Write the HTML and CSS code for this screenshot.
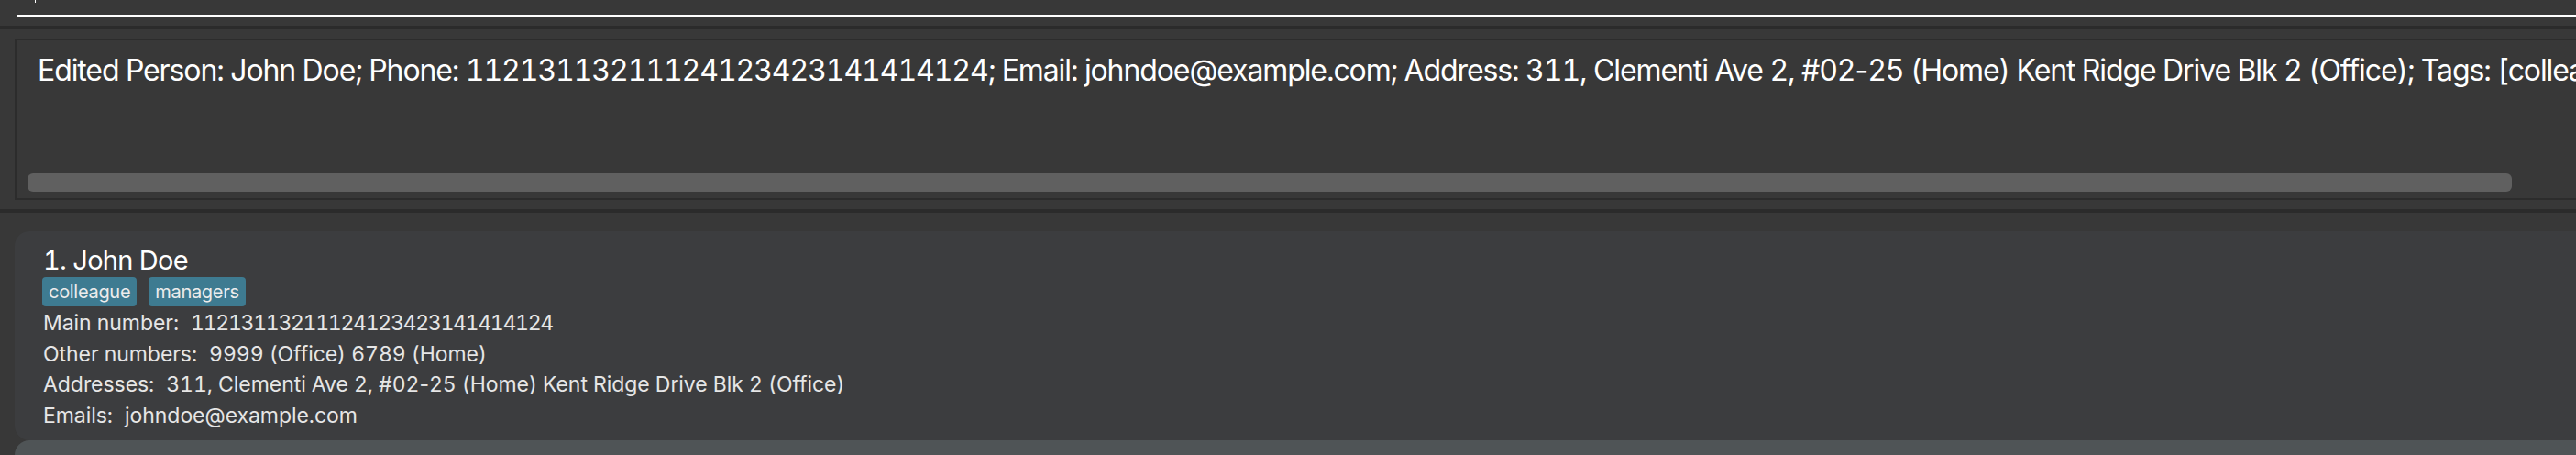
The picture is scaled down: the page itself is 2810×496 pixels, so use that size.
FILE: index.html
```html
<!DOCTYPE html>
<html>
<head>
<meta charset="utf-8">
<link rel="stylesheet" href="styles.css">
</head>
<body>
<div class="app">
  <div class="command-box">
    <div class="command-field"><div class="caret"></div></div>
  </div>
  <div class="divider"></div>
  <div class="result-pane">
    <div class="result-box">
      <div class="result-text">Edited Person: John Doe; Phone: 11213113211124123423141414124; Email: johndoe@example.com; Address: 311, Clementi Ave 2, #02<span class="plain">-</span>25 (Home) Kent Ridge Drive Blk 2 (Office); Tags: [colleague][managers]</div>
      <div class="hscroll"><div class="thumb"></div></div>
    </div>
  </div>
  <div class="divider"></div>
  <div class="list-pane">
    <div class="card">
      <div class="card-title">1. John Doe</div>
      <div class="tags"><span class="tag">colleague</span><span class="tag">managers</span></div>
      <div class="fields">
        <div class="field"><span class="label">Main number:</span><span class="value number">11213113211124123423141414124</span></div>
        <div class="field"><span class="label">Other numbers:</span><span class="value">9999 (Office) 6789 (Home)</span></div>
        <div class="field"><span class="label">Addresses:</span><span class="value">311, Clementi Ave 2, #02<span class="plain">-</span>25 (Home) Kent Ridge Drive Blk 2 (Office)</span></div>
        <div class="field"><span class="label">Emails:</span><span class="value">johndoe@example.com</span></div>
      </div>
    </div>
    <div class="card card-next"></div>
  </div>
</div>
</body>
</html>
```

FILE: styles.css
```css
html, body {
  margin: 0;
  padding: 0;
}
body {
  background: #383838;
  width: 2810px;
  height: 496px;
  overflow: hidden;
  font-family: Inter, "Liberation Sans", sans-serif;
  font-feature-settings: "tnum" 1;
  color: #ffffff;
}
.app {
  display: flex;
  flex-direction: column;
}
.command-box {
  height: 28px;
  padding-left: 18px;
  box-sizing: border-box;
}
.command-field {
  height: 18px;
  border-bottom: 2px solid #ffffff;
  box-sizing: border-box;
}
.caret {
  width: 1px;
  height: 3px;
  background: #ffffff;
  margin-left: 20px;
}
.divider {
  height: 4px;
  background: #2b2b2b;
}
.result-pane {
  padding: 10px 0 10px 16px;
}
.result-box {
  height: 176px;
  box-sizing: border-box;
  border: 2px solid #2c2c2c;
  border-right: none;
  padding: 13px 0 7px 23px;
  display: flex;
  flex-direction: column;
  overflow: hidden;
}
.result-text {
  font-size: 32px;
  line-height: 39px;
  white-space: nowrap;
  letter-spacing: -1.1px;
}
.plain {
  font-feature-settings: normal;
}
.hscroll {
  margin-top: auto;
  margin-left: -11px;
}
.thumb {
  width: 2710px;
  height: 20px;
  border-radius: 6px;
  background: #606060;
}
.list-pane {
  padding: 20px 0 0 16px;
  display: flex;
  flex-direction: column;
}
.card {
  height: 228px;
  box-sizing: border-box;
  background: #3c3d3f;
  border-radius: 16px 0 0 16px;
  padding: 15px 0 0 31px;
}
.card-next {
  background: #4f5456;
  height: 40px;
}
.card-title {
  font-size: 29px;
  line-height: 34px;
  letter-spacing: -0.7px;
}
.tags {
  display: flex;
  gap: 13px;
  margin-top: 1px;
  margin-left: -1px;
}
.tag {
  height: 32px;
  box-sizing: border-box;
  padding: 0 7px;
  background: #3e7b91;
  border-radius: 4px;
  font-size: 20px;
  line-height: 32px;
  color: #ececec;
  letter-spacing: -0.3px;
}
.fields {
  margin-top: 2px;
}
.field {
  font-size: 23px;
  line-height: 33.5px;
  color: #e6e6e6;
  white-space: nowrap;
  letter-spacing: -0.05px;
}
.label {
  margin-right: 13px;
}
.number {
  letter-spacing: -1.3px;
}
```
